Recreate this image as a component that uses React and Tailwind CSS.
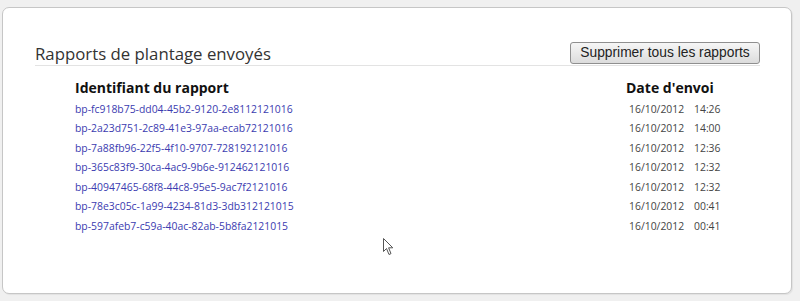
import React from 'react'

const REPORTS = [
  ['bp-fc918b75-dd04-45b2-9120-2e8112121016', '16/10/2012', '14:26'],
  ['bp-2a23d751-2c89-41e3-97aa-ecab72121016', '16/10/2012', '14:00'],
  ['bp-7a88fb96-22f5-4f10-9707-728192121016', '16/10/2012', '12:36'],
  ['bp-365c83f9-30ca-4ac9-9b6e-912462121016', '16/10/2012', '12:32'],
  ['bp-40947465-68f8-44c8-95e5-9ac7f2121016', '16/10/2012', '12:32'],
  ['bp-78e3c05c-1a99-4234-81d3-3db312121015', '16/10/2012', '00:41'],
  ['bp-597afeb7-c59a-40ac-82ab-5b8fa2121015', '16/10/2012', '00:41'],
]

export default function App() {
  return (
    <div className="relative w-[800px] h-[301px] bg-[#f0f0f0] pt-[7px] pl-[2px] font-['Open_Sans',sans-serif]">
      {/* Card */}
      <div className="w-[790px] h-[287px] bg-white border border-[#c6c6c6] rounded-[7px] shadow-[1px_1px_1px_rgba(0,0,0,0.06)] px-[32px] pt-[34px]">
        {/* Title row */}
        <div className="flex items-end justify-between border-b border-[#e3e3e3] mr-[-1px]">
          <h1 className="text-[16.8px] leading-[22px] text-[#333] font-normal">Rapports de plantage envoyés</h1>
          <button className="mb-[1px] h-[22px] w-[190px] border border-[#8f8f8f] rounded-[3px] bg-gradient-to-b from-[#f6f6f6] to-[#dcdcdc] text-[13.8px] leading-[20px] text-[#222] font-['Liberation_Sans',sans-serif]">
            Supprimer tous les rapports
          </button>
        </div>

        {/* Table */}
        <div className="pl-[40px] pt-[12px]">
          <div className="flex pb-[2px] text-[14px] leading-[20px] font-bold text-[#111]">
            <div className="w-[551px]">Identifiant du rapport</div>
            <div>Date d'envoi</div>
          </div>
          {REPORTS.map(([id, date, time]) => (
            <div key={id} className="flex h-[19.5px] items-center text-[10.4px]">
              <a href="#" className="w-[554px] text-[#3b3bb0] no-underline">{id}</a>
              <span className="w-[65px] text-[#444]">{date}</span>
              <span className="text-[#444]">{time}</span>
            </div>
          ))}
        </div>
      </div>

      {/* Mouse cursor */}
      <svg className="absolute left-[383px] top-[238px]" width="12" height="18" viewBox="0 0 12 18">
        <path d="M0.5 0.5 L0.5 13.5 L3.5 10.5 L6 16.5 L8 15.6 L5.6 9.8 L9.8 9.8 Z" fill="#fff" stroke="#555" strokeWidth="1" strokeLinejoin="round" />
      </svg>
    </div>
  )
}
